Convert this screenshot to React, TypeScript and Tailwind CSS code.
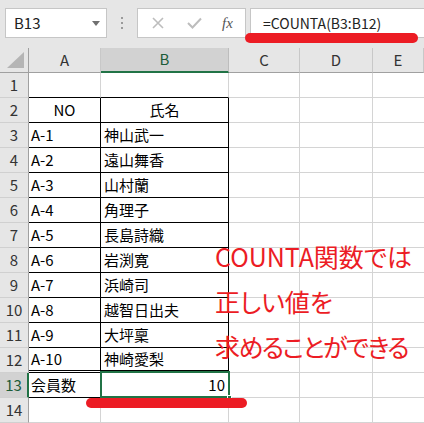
import React from "react";

const font = { fontFamily: '"Noto Sans CJK JP", "Noto Sans", sans-serif' };

type Row = { a: string; b: string; center?: boolean };

const rows: Row[] = [
  { a: "", b: "" },
  { a: "NO", b: "氏名", center: true },
  { a: "A-1", b: "神山武一" },
  { a: "A-2", b: "遠山舞香" },
  { a: "A-3", b: "山村蘭" },
  { a: "A-4", b: "角理子" },
  { a: "A-5", b: "長島詩織" },
  { a: "A-6", b: "岩渕寛" },
  { a: "A-7", b: "浜崎司" },
  { a: "A-8", b: "越智日出夫" },
  { a: "A-9", b: "大坪稟" },
  { a: "A-10", b: "神崎愛梨" },
  { a: "会員数", b: "10" },
  { a: "", b: "" },
];

function FormulaBar() {
  return (
    <div className="flex h-[48px] items-start bg-[#e6e6e6] pt-[8px] pl-[5px]">
      <div className="flex h-[30px] w-[102px] items-center justify-between border border-[#c6c6c6] bg-white pl-[8px] pr-[6px] text-[15px] text-[#222]">
        <span>B13</span>
        <span className="h-0 w-0 border-x-[4px] border-t-[5px] border-x-transparent border-t-[#707070]" />
      </div>
      <div className="flex h-[30px] w-[30px] flex-col items-center justify-center gap-[3px]">
        <span className="h-[2px] w-[2px] bg-[#9a9a9a]" />
        <span className="h-[2px] w-[2px] bg-[#9a9a9a]" />
        <span className="h-[2px] w-[2px] bg-[#9a9a9a]" />
      </div>
      <div className="flex h-[30px] w-[109px] items-center border border-[#c6c6c6] bg-white">
        <svg className="ml-[14px]" width="12" height="12" viewBox="0 0 12 12">
          <path d="M1 1 L11 11 M11 1 L1 11" stroke="#bdbdbd" strokeWidth="1.6" fill="none" />
        </svg>
        <svg className="ml-[23px]" width="15" height="12" viewBox="0 0 15 12">
          <path d="M1 6 L5.5 10.5 L14 1.5" stroke="#bdbdbd" strokeWidth="2" fill="none" />
        </svg>
        <span
          className="ml-[20px] text-[15px] italic text-[#555]"
          style={{ fontFamily: '"Liberation Serif", serif' }}
        >
          fx
        </span>
      </div>
      <div className="ml-[4px] flex h-[30px] flex-1 items-center border border-r-0 border-[#c6c6c6] bg-white pl-[12px] text-[14px] text-[#222]">
        =COUNTA(B3:B12)
      </div>
    </div>
  );
}

function ColHeaders() {
  const cols = [
    { l: "A", w: "w-[72px]" },
    { l: "B", w: "w-[128px]", sel: true },
    { l: "C", w: "w-[71px]" },
    { l: "D", w: "w-[73px]" },
    { l: "E", w: "flex-1" },
  ];
  return (
    <div className="flex h-[25px] bg-[#e6e6e6]">
      <div className="relative w-[29px] border-r border-b border-[#a0a0a0]">
        <svg className="absolute right-[4px] bottom-[4px]" width="17" height="16" viewBox="0 0 17 16">
          <path d="M17 0 L17 16 L0 16 Z" fill="#b5b5b5" />
        </svg>
      </div>
      {cols.map((c) => (
        <div
          key={c.l}
          className={
            c.sel
              ? `${c.w} flex items-center justify-center border-r border-b-2 border-r-[#bdbdbd] border-b-[#217346] bg-[#d2d2d2] text-[15px] text-[#1d5c38]`
              : `${c.w} flex items-center justify-center border-r border-b border-r-[#c8c8c8] border-b-[#a0a0a0] text-[15px] text-[#333]`
          }
        >
          {c.l}
        </div>
      ))}
    </div>
  );
}

function GridRow({ row, n }: { row: Row; n: number }) {
  const inTable = n >= 2 && n <= 13;
  const last = n === 12;
  const total = n === 13;
  const edge = last ? "border-b-[3px] border-double border-b-black" : inTable ? "border-b border-b-black" : "border-b border-b-[#d4d4d4]";
  const topBlack = n === 1;
  return (
    <div className="flex h-[25px]">
      <div
        className={
          total
            ? "flex w-[29px] items-center justify-center border-r-2 border-b border-r-[#217346] border-b-[#d0d0d0] bg-[#d2d2d2] text-[15px] text-[#1d5c38]"
            : "flex w-[29px] items-center justify-center border-r border-b border-r-[#a0a0a0] border-b-[#d0d0d0] bg-[#e6e6e6] text-[15px] text-[#333]"
        }
      >
        {n}
      </div>
      <div
        className={`flex w-[72px] items-center px-[2px] text-[15px] text-black ${row.center ? "justify-center" : ""} ${
          inTable ? "border-r border-r-black" : "border-r border-r-[#d4d4d4]"
        } ${topBlack ? "border-b border-b-black" : edge}`}
      >
        {row.a}
      </div>
      <div
        className={`relative flex w-[128px] items-center px-[3px] text-[15px] text-black ${
          row.center ? "justify-center" : total ? "justify-end" : ""
        } ${inTable ? "border-r border-r-black" : "border-r border-r-[#d4d4d4]"} ${topBlack ? "border-b border-b-black" : edge}`}
      >
        {row.b}
        {total && (
          <>
            <div className="pointer-events-none absolute -top-[2px] -left-[1px] -right-[2px] -bottom-[1px] border-2 border-[#217346]" />
            <div className="absolute -right-[4px] -bottom-[3px] h-[5px] w-[5px] border border-white bg-[#217346]" />
          </>
        )}
      </div>
      <div className="w-[71px] border-r border-b border-[#d4d4d4]" />
      <div className="w-[73px] border-r border-b border-[#d4d4d4]" />
      <div className="flex-1 border-b border-[#d4d4d4]" />
    </div>
  );
}

export default function App() {
  return (
    <div className="relative h-[423px] w-[424px] overflow-hidden bg-white" style={font}>
      <FormulaBar />
      <ColHeaders />
      {rows.map((r, i) => (
        <GridRow key={i} row={r} n={i + 1} />
      ))}

      {/* red annotations */}
      <div className="absolute left-[245px] top-[33px] h-[10px] w-[173px] rounded-full bg-[#ec1c24]" />
      <div className="absolute left-[86px] top-[398px] h-[10px] w-[161px] rounded-full bg-[#ec1c24]" />
      <div className="absolute left-[215px] top-[234px] whitespace-nowrap text-[25px] leading-[45px] text-[#ec1c24] [font-feature-settings:'palt']">
        <div>COUNTA関数では</div>
        <div>正しい値を</div>
        <div className="tracking-[-1.6px]">求めることができる</div>
      </div>
    </div>
  );
}
